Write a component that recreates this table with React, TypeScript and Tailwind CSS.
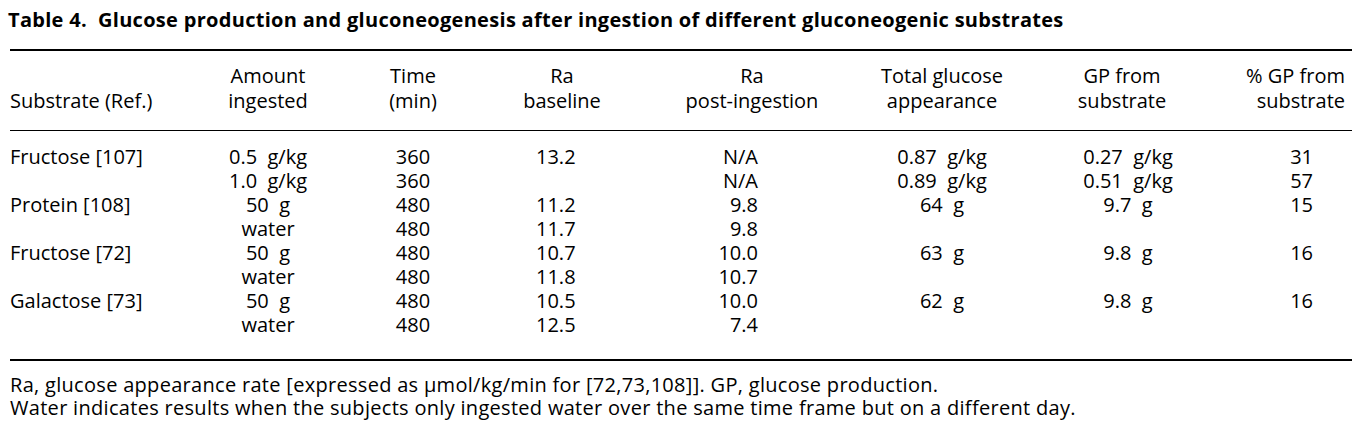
const cols = "grid grid-cols-[190px_136px_154px_144px_236px_144px_216px_122px]";

type Row = {
  substrate?: string;
  amount: string;
  time: string;
  base?: string;
  post: string;
  total?: string;
  gp?: string;
  pct?: string;
};

const rows: Row[] = [
  { substrate: "Fructose [107]", amount: "0.5  g/kg", time: "360", base: "13.2", post: "N/A", total: "0.87  g/kg", gp: "0.27  g/kg", pct: "31" },
  { amount: "1.0  g/kg", time: "360", post: "N/A", total: "0.89  g/kg", gp: "0.51  g/kg", pct: "57" },
  { substrate: "Protein [108]", amount: "50  g", time: "480", base: "11.2", post: "9.8", total: "64  g", gp: "9.7  g", pct: "15" },
  { amount: "water", time: "480", base: "11.7", post: "9.8" },
  { substrate: "Fructose [72]", amount: "50  g", time: "480", base: "10.7", post: "10.0", total: "63  g", gp: "9.8  g", pct: "16" },
  { amount: "water", time: "480", base: "11.8", post: "10.7" },
  { substrate: "Galactose [73]", amount: "50  g", time: "480", base: "10.5", post: "10.0", total: "62  g", gp: "9.8  g", pct: "16" },
  { amount: "water", time: "480", base: "12.5", post: "7.4" },
];

export default function App() {
  return (
    <div className="w-[1365px] h-[427px] bg-white text-black font-['Open_Sans','Liberation_Sans',sans-serif] text-[20px] overflow-hidden">
      <div className="pl-[8px] pt-[8px] leading-[24px] font-bold tracking-[0.3px]">
        Table 4.&nbsp; Glucose production and gluconeogenesis after ingestion of different gluconeogenic substrates
      </div>

      <div className="ml-[10px] w-[1342px]">
        <div className="mt-[17px] h-[2px] bg-black" />

        {/* header */}
        <div className={`${cols} items-end pt-[12px] leading-[25px]`}>
          <div>Substrate (Ref.)</div>
          <div className="text-center">Amount<br />ingested</div>
          <div className="text-center">Time<br />(min)</div>
          <div className="text-center">Ra<br />baseline</div>
          <div className="text-center">Ra<br />post-ingestion</div>
          <div className="text-center">Total glucose<br />appearance</div>
          <div className="text-center">GP from<br />substrate</div>
          <div className="text-right pr-[7px]">% GP from<br />substrate</div>
        </div>

        <div className="mt-[17px] h-px bg-black" />

        {/* body */}
        <div className="pt-[14px] leading-[24px] whitespace-pre">
          {rows.map((r, i) => (
            <div key={i} className={cols}>
              <div>{r.substrate ?? ""}</div>
              <div className="text-center">{r.amount}</div>
              <div className="text-center">{r.time}</div>
              <div className="pl-[46px]">{r.base ?? ""}</div>
              <div className="text-right pr-[112px]">{r.post}</div>
              <div className="text-center">{r.total ?? ""}</div>
              <div className="text-center pl-[12px]">{r.gp ?? ""}</div>
              <div className="text-right pr-[39px]">{r.pct ?? ""}</div>
            </div>
          ))}
        </div>

        <div className="mt-[22px] h-[2px] bg-black" />

        <div className="pt-[12px] leading-[23px] tracking-[0.3px]">
          <p>Ra, glucose appearance rate [expressed as μmol/kg/min for [72,73,108]]. GP, glucose production.</p>
          <p>Water indicates results when the subjects only ingested water over the same time frame but on a different day.</p>
        </div>
      </div>
    </div>
  );
}
